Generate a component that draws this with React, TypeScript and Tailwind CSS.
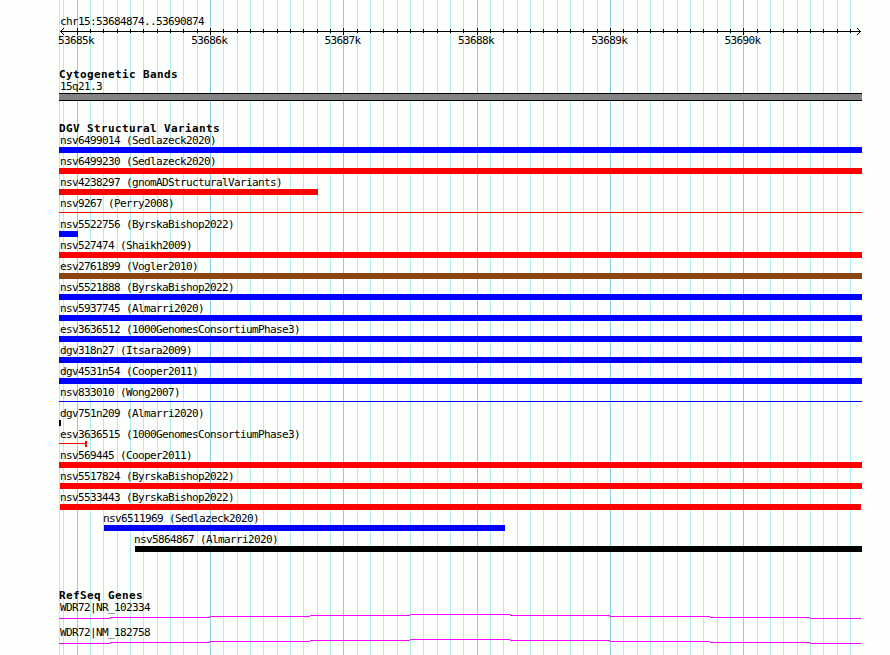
interface Variant {
    label: string;
    color: string;
    start?: number;
    end?: number;
    shape?: "bar" | "line" | "breakpoint";
}

const LEFT = 59;
const RIGHT = 862;

const variants: Variant[] = [
    { label: "nsv6499014 (Sedlazeck2020)", color: "#0000ff" },
    { label: "nsv6499230 (Sedlazeck2020)", color: "#ff0000" },
    { label: "nsv4238297 (gnomADStructuralVariants)", color: "#ff0000", end: 318 },
    { label: "nsv9267 (Perry2008)", color: "#ff0000", shape: "line" },
    { label: "nsv5522756 (ByrskaBishop2022)", color: "#0000ff", end: 78 },
    { label: "nsv527474 (Shaikh2009)", color: "#ff0000" },
    { label: "esv2761899 (Vogler2010)", color: "#8b4513" },
    { label: "nsv5521888 (ByrskaBishop2022)", color: "#0000ff" },
    { label: "nsv5937745 (Almarri2020)", color: "#0000ff" },
    { label: "esv3636512 (1000GenomesConsortiumPhase3)", color: "#0000ff" },
    { label: "dgv318n27 (Itsara2009)", color: "#0000ff" },
    { label: "dgv4531n54 (Cooper2011)", color: "#0000ff" },
    { label: "nsv833010 (Wong2007)", color: "#0000ff", shape: "line" },
    { label: "dgv751n209 (Almarri2020)", color: "#000000", end: 61 },
    { label: "esv3636515 (1000GenomesConsortiumPhase3)", color: "#ff0000", end: 87, shape: "breakpoint" },
    { label: "nsv569445 (Cooper2011)", color: "#ff0000" },
    { label: "nsv5517824 (ByrskaBishop2022)", color: "#ff0000", start: 60 },
    { label: "nsv5533443 (ByrskaBishop2022)", color: "#ff0000", start: 60, end: 861 },
    { label: "nsv6511969 (Sedlazeck2020)", color: "#0000ff", start: 104, end: 505 },
    { label: "nsv5864867 (Almarri2020)", color: "#000000", start: 135 },
];

const genes = ["WDR72|NR_102334", "WDR72|NM_182758"];

// one grid line for every 100 bases, ten of them to a 1k mark
const ticks = Array.from({ length: 60 }, (_, i) => ({
    x: Math.floor(77 + ((i - 1) * 40) / 3 + 0.01),
    major: (i - 1) % 10 === 0,
})).filter((t) => t.x < 861);

const marks = ["53685k", "53686k", "53687k", "53688k", "53689k", "53690k"];

const smallText = "font-['DejaVu_Sans_Mono',monospace] text-[11px] leading-[13px] tracking-[-0.622px] whitespace-pre";

function Grid() {
    return (
        <svg className="absolute inset-0" width="890" height="655" shapeRendering="crispEdges">
            <rect x={LEFT} y="0" width="1" height="655" fill="#afeeee" />
            {ticks.map((t) => (
                <rect key={t.x} x={t.x} y="0" width="1" height="655" fill={t.major ? "#87ceeb" : "#afeeee"} />
            ))}
        </svg>
    );
}

function Ruler() {
    return (
        <div className="h-[53px] pt-[15px]">
            <div className={`${smallText} pl-[60px]`}>chr15:53684874..53690874</div>
            <svg className="block" width="890" height="7" shapeRendering="crispEdges">
                <rect x="60" y="3" width="801" height="1" />
                {ticks.filter((t) => t.x > 63).map((t) => (
                    <rect key={t.x} x={t.x} y={t.major ? 0 : 1} width="1" height={t.major ? 7 : 4} />
                ))}
                {[1, 2, 3].map((d) => (
                    <g key={d}>
                        <rect x={60 + d} y={3 - d} width="1" height="1" />
                        <rect x={60 + d} y={3 + d} width="1" height="1" />
                        <rect x={860 - d} y={3 - d} width="1" height="1" />
                        <rect x={860 - d} y={3 + d} width="1" height="1" />
                    </g>
                ))}
            </svg>
            <div className="flex pl-[58px] -mt-px">
                {marks.map((m) => (
                    <div key={m} className={`${smallText} w-[133.3px] shrink-0`}>{m}</div>
                ))}
            </div>
        </div>
    );
}

function TrackTitle({ title }: { title: string }) {
    return (
        <h2 className="pl-[59px] h-[11px] font-['DejaVu_Sans_Mono',monospace] font-bold text-[11px] leading-[11px] tracking-[0.378px] whitespace-pre">{title}</h2>
    );
}

function VariantRow({ variant }: { variant: Variant }) {
    const { label, color, start = LEFT, end = RIGHT, shape = "bar" } = variant;
    const width = end - start;

    return (
        <div className="h-[21px]" style={{ paddingLeft: start }}>
            <div className={`${smallText} ${start === LEFT ? "pl-px" : start > 100 ? "-ml-px" : ""}`}>{label}</div>
            {shape === "bar" && <div className="h-1.5" style={{ width, background: color }} />}
            {shape === "line" && (
                <div className="pt-0.5">
                    <div className="h-px" style={{ width, background: color }} />
                </div>
            )}
            {shape === "breakpoint" && (
                <div className="flex items-start" style={{ width }}>
                    <div className="h-px grow mt-0.5" style={{ background: color }} />
                    <div className="h-1.5 w-0.5" style={{ background: color }} />
                </div>
            )}
        </div>
    );
}

function GeneRow({ label }: { label: string }) {
    return (
        <div className="h-[25px]">
            <div className={`${smallText} pl-[60px]`}>{label}</div>
            <svg className="block" width="890" height="5" shapeRendering="crispEdges">
                {[4, 3, 2, 1, 0, 1, 2, 3, 4].map((y, i) => {
                    const from = i === 0 ? LEFT : 10 + i * 100;
                    const to = i === 8 ? 861 : 110 + i * 100;
                    return <rect key={i} x={from} y={y} width={to - from} height="1" fill="#ff00ff" />;
                })}
            </svg>
        </div>
    );
}

function App() {
    return (
        <div className="relative w-[890px] h-[655px] overflow-hidden bg-[#fdfffc] text-black">
            <Grid />
            <div className="relative">
                <Ruler />

                <section className="pt-4 h-[54px]">
                    <TrackTitle title="Cytogenetic Bands" />
                    <div className={`${smallText} pl-[60px]`}>15q21.3</div>
                    <div className="ml-[59px] w-[803px] h-2 border-y border-black bg-[#848284]" />
                </section>

                <section className="pt-4">
                    <TrackTitle title="DGV Structural Variants" />
                    {variants.map((v) => (
                        <VariantRow key={v.label} variant={v} />
                    ))}
                </section>

                <section className="pt-9">
                    <TrackTitle title="RefSeq Genes" />
                    {genes.map((g) => (
                        <GeneRow key={g} label={g} />
                    ))}
                </section>
            </div>
        </div>
    );
}

export default App;
